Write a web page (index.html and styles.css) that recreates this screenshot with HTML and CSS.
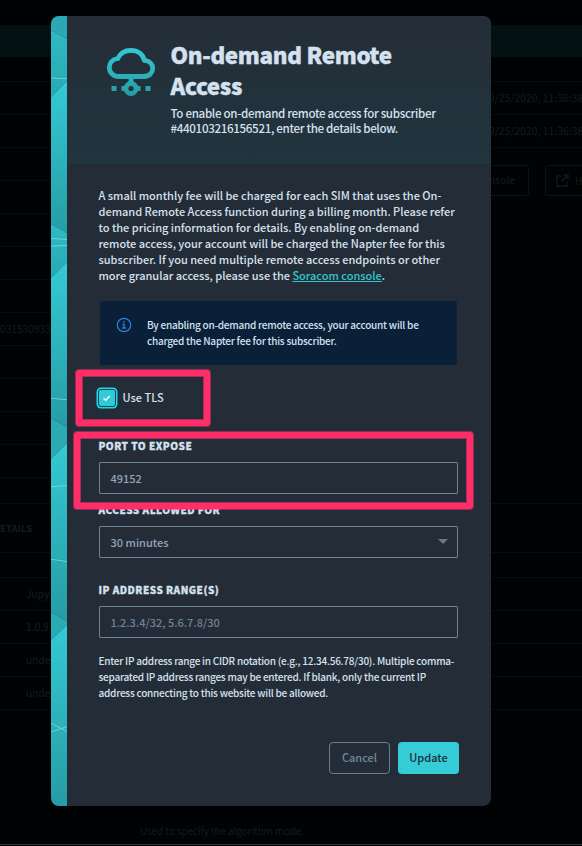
FILE: index.html
```html
<!DOCTYPE html>
<html lang="en">
<head>
<meta charset="utf-8">
<title>On-demand Remote Access</title>
<link rel="stylesheet" href="styles.css">
</head>
<body>
<div class="page">
  <div class="topbar"></div>
  <div class="upper">
    <div class="col left">
      <div class="row first"></div><div class="row"></div><div class="row"></div><div class="row"></div><div class="row"></div><div class="row"></div><div class="row"></div><div class="row"></div><div class="row value">031530933</div><div class="row"></div><div class="row"></div><div class="row"></div><div class="row"></div>
    </div>
    <div class="col right">
      <div class="row first"></div><div class="row date">9/25/2020, 11:36:38</div><div class="row date">9/25/2020, 11:36:38</div>
      <div class="actions">
        <span class="ghost console">nsole</span>
        <span class="ghost help"><svg width="13" height="13" viewBox="0 0 13 13"><path d="M5 2H1v10h10V8M8 1h4v4M12 1 6 7"/></svg>H</span>
      </div>
    </div>
  </div>
  <div class="details">ETAILS</div>
  <div class="gap"></div>
  <div class="cells"><div>Jupy</div><div>1.0.9</div><div>unde</div><div>unde</div></div>
  <div class="note">Used to specify the algorithm mode.</div>
</div>

<div class="dialog">
  <svg class="stripe" width="16" height="790" viewBox="0 16 16 790" preserveAspectRatio="none">
    <defs>
      <linearGradient id="tone" x1="0" y1="0" x2="0" y2="1"><stop offset="0" stop-color="#34cad4"/><stop offset="1" stop-color="#269ca5"/></linearGradient>
      <linearGradient id="mid" x1="0" y1="0" x2="0" y2="1"><stop offset="0" stop-color="#2fbac4"/><stop offset="1" stop-color="#29a8b2"/></linearGradient>
    </defs>
    <path d="M0 16h16v23L0 30z" fill="#2ba8b1"/>
    <path d="M0 30 16 39V81L0 97z" fill="url(#mid)"/>
    <path d="M0 97 16 81V233L0 224z" fill="url(#tone)"/>
    <path d="M0 224 16 233V262L0 278z" fill="url(#mid)"/>
    <path d="M0 278 16 262V427L0 418z" fill="url(#tone)"/>
    <path d="M0 418 16 427V443L0 459z" fill="#2aabb4"/>
    <path d="M0 459 16 443V621L0 612z" fill="url(#tone)"/>
    <path d="M0 612 16 621V625L0 640z" fill="#2aabb4"/>
    <path d="M0 640 16 625V806H0z" fill="url(#tone)"/>
    <path class="threads" d="M0 78 16 78.7M0 238.4 16 239.5M0 246.3 16 245.3M0 398.3 16 399.7M0 486.7 16 485.5M0 559.3 16 561.5M0 723 16 731.5M0 732 16 726.5"/>
  </svg>
  <div class="panel">
    <header>
      <svg class="cloud" width="50" height="50" viewBox="0 0 50 50">
        <defs><linearGradient id="ic" gradientUnits="userSpaceOnUse" x1="0" y1="0" x2="0" y2="50"><stop offset="0" stop-color="#34cad4"/><stop offset="1" stop-color="#269ca5"/></linearGradient></defs>
        <g fill="none" stroke="url(#ic)" stroke-width="4.8">
          <path d="M13 29.500H38C43.500 29.500 46.700 25.600 46.700 21.500C46.700 17 43.500 13.700 38.500 13.300C36.700 7 31.500 3.300 25 3.300C18.700 3.300 14 6.500 11.800 11.500C6.500 12.300 3.300 16 3.300 20.500C3.300 25.700 7.500 29.500 13 29.500Z"/>
          <path d="M25 30v5"/><circle cx="25" cy="41.500" r="5"/>
        </g>
        <path fill="url(#ic)" d="M5.500 39h5v5h-5zM15.500 39h4v5h-4zM30.500 39h4v5h-4zM39.500 39h5v5h-5z"/>
      </svg>
      <div class="heading">
        <h1>On-demand Remote<br>Access</h1>
        <p>To enable on-demand remote access for subscriber<br>#440103216156521, enter the details below.</p>
      </div>
    </header>
    <main>
      <p class="intro">A small monthly fee will be charged for each SIM that uses the On-<br>demand Remote Access function during a billing month. Please refer<br>to the pricing information for details. By enabling on-demand<br>remote access, your account will be charged the Napter fee for this<br>subscriber. If you need multiple remote access endpoints or other<br>more granular access, please use the <a href="#">Soracom console</a>.</p>
      <div class="info">
        <svg width="16" height="16" viewBox="0 0 16 16"><circle cx="8" cy="8" r="6.700"/><path d="M6.500 7.500H8V11M6.200 11h3.600M7.300 5h1.500"/></svg>
        <p>By enabling on-demand remote access, your account will be<br>charged the Napter fee for this subscriber.</p>
      </div>
      <div class="tls">
        <span class="check"><svg width="16" height="16" viewBox="0 0 16 16"><path d="m4.500 8.200 2.200 2L10.700 6"/></svg></span>
        <span>Use TLS</span>
        <div class="mark mark-tls"></div>
      </div>
      <div class="field tight">
        <label>PORT TO EXPOSE</label>
        <div class="input">49152</div>
        <div class="mark mark-port"></div>
      </div>
      <div class="field">
        <label>ACCESS ALLOWED FOR</label>
        <div class="input">30 minutes<i class="arrow"></i></div>
      </div>
      <div class="field">
        <label>IP ADDRESS RANGE(S)</label>
        <div class="input placeholder">1.2.3.4/32, 5.6.7.8/30</div>
      </div>
      <p class="hint">Enter IP address range in CIDR notation (e.g., 12.34.56.78/30). Multiple comma-<br>separated IP address ranges may be entered. If blank, only the current IP<br>address connecting to this website will be allowed.</p>
      <div class="buttons"><button class="cancel">Cancel</button><button class="update">Update</button></div>
    </main>
  </div>
</div>
</body>
</html>
```
FILE: styles.css
```css
* { box-sizing: border-box; }
body, h1, p { margin: 0; }
body {
  width: 582px;
  height: 846px;
  overflow: hidden;
  position: relative;
  background: #010203;
  color: #d5e1ef;
  font: 500 11px/16px "Noto Sans CJK JP", sans-serif;
  white-space: nowrap;
}
button { font: inherit; padding: 0; }

.page { height: 845px; padding-top: 25px; border-bottom: 1px solid #343536; color: #181b1d; font-size: 10.2px; font-weight: 400; }
.topbar { height: 32px; background: #031113; }
.upper { display: flex; justify-content: space-between; height: 447px; border-bottom: 1px solid #0a0b0c; }
.left { width: 51px; }
.right { width: 93px; overflow: hidden; }
.row { height: 33px; line-height: 32px; border-bottom: 1px solid #090a0b; }
.row.first { height: 25px; }
.row.date { line-height: 31px; letter-spacing: .1px; }
.actions { display: flex; gap: 16px; padding-top: 17px; }
.ghost { flex: none; height: 31px; border: 1px solid #0e1011; border-radius: 3px; line-height: 28px; }
.console { width: 40px; border-left: 0; border-radius: 0 3px 3px 0; }
.help { width: 60px; padding-left: 10px; display: flex; align-items: center; gap: 6px; }
.help svg { flex: none; fill: none; stroke: #15181a; stroke-width: 1.5; }
.details { height: 49px; line-height: 48px; font-size: 9.5px; font-weight: 700; letter-spacing: .1px; border-bottom: 1px solid #0a0b0c; }
.gap { height: 25px; border-bottom: 1px solid #0a0b0c; }
.cells div { height: 33px; line-height: 32px; padding-left: 26px; border-bottom: 1px solid #0a0b0c; }
.note { padding: 113px 0 0 140px; line-height: 16px; font-size: 9.75px; }

.dialog {
  position: absolute;
  left: 51px;
  top: 16px;
  width: 440px;
  height: 790px;
  display: flex;
  border-radius: 8px;
  overflow: hidden;
  background: #242d37;
}
.stripe { flex: none; }
.threads { fill: none; stroke: #8fe5e6; stroke-width: .8; opacity: .8; }
.panel { flex: 1; min-width: 0; }
header {
  height: 148px;
  padding: 23px 0 0 38px;
  display: flex;
  background: linear-gradient(#242d38, #21353e);
}
.cloud { flex: none; margin: 8px 14.500px 0 1px; }
h1 { font-size: 22.400px; line-height: 31px; font-weight: 900; letter-spacing: -.33px; -webkit-text-stroke: .4px #d5e1ef; }
.heading p { margin-top: 5px; line-height: 15px; font-size: 11.600px; letter-spacing: -.33px; }
main { padding: 23px 32px 0; }
.intro { height: 114px; margin-left: -.5px; letter-spacing: -.01px; }
.intro a { color: #32c6d0; text-decoration: underline; }
.info {
  width: 357px;
  height: 64px;
  margin-left: 1px;
  padding: 16px;
  display: flex;
  gap: 15px;
  border-radius: 3px;
  background: #0a1f38;
  font-size: 10px;
  letter-spacing: -.23px;
}
.info svg { flex: none; fill: none; stroke: #2f7de0; stroke-width: 1.3; }
.tls { position: relative; height: 69px; margin-top: 4px; padding-top: 19px; display: flex; gap: 6.500px; line-height: 18px; }
.check {
  width: 18px;
  height: 18px;
  margin: 1px 0 0 -1px;
  flex: none;
  border: 1px solid #174551;
  border-radius: 3px;
  background: #33c9d5;
  box-shadow: 0 0 0 1.5px #13dcee;
}
.check svg { display: block; fill: none; stroke: #fff; stroke-width: 1.4; }
.mark { position: absolute; z-index: 2; border: 6px solid #ff2e69; border-radius: 3px; box-shadow: 0 0 0 1px rgba(255, 46, 105, .5), inset 0 0 0 1px rgba(255, 46, 105, .6); }
.mark-tls { left: -23px; top: 1px; width: 134px; height: 56px; }
.mark-port { left: -25px; top: -6px; width: 399px; height: 77px; }
.field { position: relative; height: 80px; }
.field.tight { height: 64px; }
.field label { display: block; height: 24px; margin-left: -.5px; font-size: 10px; line-height: 16px; font-weight: 900; letter-spacing: .5px; -webkit-text-stroke: .3px #d5e1ef; }
.input {
  width: 359px;
  height: 32px;
  padding: 0 9.500px 1px 10.500px;
  display: flex;
  align-items: center;
  justify-content: space-between;
  border: 1px solid #6c8295;
  border-radius: 1px;
  color: #91a5bc;
}
.placeholder { color: #6c8197; }
.arrow { border: 5px solid transparent; border-top-color: #667b91; border-bottom: 0; }
.hint { height: 89px; margin: -9px 0 0 -.5px; font-size: 10px; letter-spacing: -.235px; }
.buttons { display: flex; justify-content: flex-end; gap: 8px; }
.buttons button { width: 61px; height: 32px; padding-bottom: 2px; border-radius: 4px; }
.cancel { border: 1px solid #667e96; background: transparent; color: #71879e; }
.update { border: 0; background: #35ccd8; color: #202d38; }
```
